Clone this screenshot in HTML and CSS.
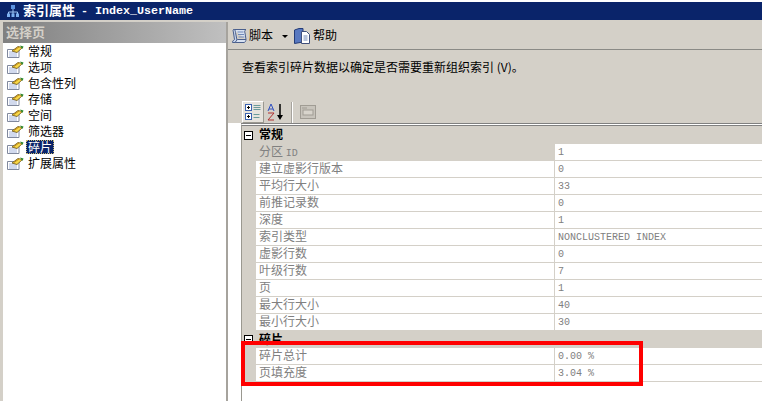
FILE: index.html
```html
<!DOCTYPE html>
<html lang="zh">
<head>
<meta charset="utf-8">
<title>索引属性</title>
<link rel="stylesheet" href="styles.css">
</head>
<body>
<svg class="defs" width="0" height="0" aria-hidden="true">
  <symbol id="page" viewBox="0 0 17 13">
    <path d="M0.500 4.500H8L12 3.500V12.500H0.500z" fill="#fff" stroke="#80889c"/>
    <path d="M2 7h8M2 9h8M2 11h8" stroke="#a4b4dc"/>
    <path d="M5 6 11 1.500 15.500 2.500 10 7.500z" fill="#f8d848" stroke="#6a5010" stroke-width=".8"/>
    <path d="M7 5.500 12 2" stroke="#c08a18"/>
    <path d="M13 0.500 16.500 1.500 15.500 4z" fill="#2a8a2a"/>
  </symbol>
</svg>
<div class="window">
  <header class="title">
    <svg class="title-icon" viewBox="0 0 12 12" width="12" height="12">
      <path d="M6 1V7M1.500 10V7H10.500V10M6 7V10" stroke="#9cc4f4" fill="none"/>
      <rect x="4" y="0" width="4" height="4" fill="#5c94e0"/>
      <rect x="0" y="8.500" width="3" height="3.500" fill="#7cb0f0"/>
      <rect x="4.500" y="8.500" width="3" height="3.500" fill="#7cb0f0"/>
      <rect x="9" y="8.500" width="3" height="3.500" fill="#7cb0f0"/>
    </svg>
    <span class="title-cjk">索引属性</span>
    <span class="title-latin">- Index_UserName</span>
  </header>
  <div class="body">
    <aside class="side">
      <div class="side-head">选择页</div>
      <ul class="pages">
        <li class="page"><svg class="page-icon"><use href="#page"/></svg><span>常规</span></li>
        <li class="page"><svg class="page-icon"><use href="#page"/></svg><span>选项</span></li>
        <li class="page"><svg class="page-icon"><use href="#page"/></svg><span>包含性列</span></li>
        <li class="page"><svg class="page-icon"><use href="#page"/></svg><span>存储</span></li>
        <li class="page"><svg class="page-icon"><use href="#page"/></svg><span>空间</span></li>
        <li class="page"><svg class="page-icon"><use href="#page"/></svg><span>筛选器</span></li>
        <li class="page"><svg class="page-icon"><use href="#page"/></svg><span class="selected">碎片</span></li>
        <li class="page"><svg class="page-icon"><use href="#page"/></svg><span>扩展属性</span></li>
      </ul>
    </aside>
    <main class="main">
      <div class="toolbar">
        <svg class="tool-icon" viewBox="0 0 16 16" width="16" height="16">
          <path d="M2.500 1.500H15C13.500 2.500 13.500 3.500 14 5L15 11.500H6.500C5 11.500 4 13 4 14.500H13C14 14.500 15 13 15 11.500" fill="#d8e2f2" stroke="#4a5f8c"/>
          <path d="M2.500 1.500C4 1.500 4.500 3 4.500 4.500L6 12 4 14.500H1.500C1 14 2.500 12 3.500 11.500L2.500 5C2.500 3.500 1.500 2.500 2.500 1.500z" fill="#c4d2ea" stroke="#4a5f8c"/>
          <path d="M6.500 4h6M7 6.500h6M7.500 9h6" stroke="#7088b8"/>
        </svg>
        <span class="tool-label">脚本</span>
        <span class="caret"></span>
        <svg class="tool-icon help-icon" viewBox="0 0 16 16" width="16" height="16">
          <path d="M0.500 2 5 0.500H9V14L0.500 15.500z" fill="#5878c0" stroke="#243c78"/>
          <path d="M7.500 3.500h5l3 3V15.500h-8z" fill="#fff" stroke="#40507c"/>
          <path d="M9.500 8h4M9.500 10h4M9.500 12h4" stroke="#7088b8"/>
        </svg>
        <span class="tool-label">帮助</span>
      </div>
      <p class="desc">查看索引碎片数据以确定是否需要重新组织索引 (V)。</p>
      <div class="prop-tools">
        <span class="prop-btn active">
          <svg viewBox="0 0 20 20" width="20" height="20">
            <rect x="2.500" y="2.500" width="6" height="6" fill="#fff" stroke="#3a62b0"/>
            <rect x="2.500" y="11.500" width="6" height="6" fill="#fff" stroke="#3a62b0"/>
            <path d="M4 5.500h3M5.500 4v3M4 14.500h3M5.500 13v3" stroke="#000"/>
            <path d="M10.500 3.500h7M10.500 5.500h7M10.500 7.500h7" stroke="#6a9a9a"/>
            <path d="M10.500 12.500h6M10.500 15.500h6" stroke="#6a9a9a"/>
          </svg>
        </span>
        <span class="prop-btn">
          <svg viewBox="0 0 20 20" width="20" height="20">
            <path d="M2 9 5 2l3 7M3 7h4" stroke="#3050c0" fill="none"/>
            <path d="M2 11h6l-6 7h6" stroke="#b03030" fill="none"/>
            <path d="M14 2v13" stroke="#000" stroke-width="1.500"/>
            <path d="M11 13h6l-3 5z" fill="#000"/>
          </svg>
        </span>
        <span class="prop-sep"></span>
        <span class="prop-btn">
          <svg viewBox="0 0 20 20" width="20" height="20">
            <rect x="2.500" y="3.500" width="15" height="13" fill="#c8c4bc" stroke="#a09c94"/>
            <rect x="5" y="8" width="10" height="5" fill="#d8d4cc" stroke="#a09c94"/>
            <path d="M4 6h5" stroke="#a09c94"/>
          </svg>
        </span>
      </div>
      <div class="grid">
        <div class="group first"><span class="toggle"></span><b>常规</b></div>
        <div class="row current"><span class="name">分区 <i>ID</i></span><span class="val">1</span></div>
        <div class="row"><span class="name">建立虚影行版本</span><span class="val">0</span></div>
        <div class="row"><span class="name">平均行大小</span><span class="val">33</span></div>
        <div class="row"><span class="name">前推记录数</span><span class="val">0</span></div>
        <div class="row"><span class="name">深度</span><span class="val">1</span></div>
        <div class="row"><span class="name">索引类型</span><span class="val">NONCLUSTERED INDEX</span></div>
        <div class="row"><span class="name">虚影行数</span><span class="val">0</span></div>
        <div class="row"><span class="name">叶级行数</span><span class="val">7</span></div>
        <div class="row"><span class="name">页</span><span class="val">1</span></div>
        <div class="row"><span class="name">最大行大小</span><span class="val">40</span></div>
        <div class="row"><span class="name">最小行大小</span><span class="val">30</span></div>
        <div class="group"><span class="toggle"></span><b>碎片</b></div>
        <div class="row"><span class="name">碎片总计</span><span class="val">0.00 %</span></div>
        <div class="row"><span class="name">页填充度</span><span class="val">3.04 %</span></div>
      </div>
      <div class="highlight"></div>
    </main>
  </div>
</div>
</body>
</html>
```
FILE: styles.css
```css
* { box-sizing: border-box; }
html, body { margin: 0; height: 100%; }
body {
  width: 762px;
  height: 401px;
  overflow: hidden;
  background: #fff;
  font-family: "Noto Sans CJK SC", "Liberation Sans", sans-serif;
  font-size: 12px;
  color: #000;
}
.defs { position: absolute; }
.window { display: flex; flex-direction: column; height: 100%; padding-top: 2px; background: linear-gradient(#fff 2px, #d4d0c8 2px); }
.title {
  display: flex;
  align-items: center;
  height: 18px;
  flex: none;
  padding-left: 7px;
  background: #0a246a;
  color: #fff;
  font-weight: 700;
}
.title-icon { margin-right: 4px; }
.title-cjk { font-size: 13px; line-height: 16px; padding-bottom: 2px; width: 58px; }
.title-latin { font-family: "Liberation Mono", monospace; font-size: 11.67px; white-space: pre; }
.body { flex: 1; display: flex; margin-top: 2px; min-height: 0; }
.side {
  width: 225px;
  flex: none;
  margin-left: 3px;
  display: flex;
  flex-direction: column;
  background: #fff;
  border-right: 2px solid #a6a39d;
}
.side-head {
  height: 21px;
  flex: none;
  padding-left: 3px;
  font-weight: 700;
  font-size: 13px;
  line-height: 19px;
  color: #d4d0c8;
  background: linear-gradient(to right, #808080, #c0c0c0);
}
.pages { list-style: none; margin: 0; padding: 0; }
.page { display: flex; align-items: center; height: 16px; padding-left: 4px; }
.page-icon { width: 17px; height: 13px; margin-right: 3px; flex: none; }
.page span { line-height: 14px; padding: 0 1px; }
.page .selected { background: #0a246a; color: #fff; outline: 1px dotted #c8b870; outline-offset: -1px; padding: 0 2px; margin-left: -1px; }
.main { flex: 1; min-width: 0; position: relative; display: flex; flex-direction: column; background: #fff; }
.toolbar {
  height: 28px;
  flex: none;
  display: flex;
  align-items: center;
  padding-left: 3px;
  background: #d4d0c8;
  border-bottom: 1px solid #8a8a86;
}
.tool-icon { flex: none; margin-right: 2px; }
.help-icon { margin-right: 3px; }
.tool-label { line-height: 16px; padding-bottom: 2px; }
.caret {
  width: 0;
  height: 0;
  margin: 2px 6px 0 9px;
  border: 3px solid transparent;
  border-top: 3px solid #000;
  border-bottom: 0;
}
.desc { flex: none; height: 51px; margin: 0; padding: 7px 0 0 14px; background: #d4d0c8; line-height: 20px; white-space: pre; }
.prop-tools {
  flex: none;
  display: flex;
  align-items: center;
  height: 22px;
  padding-left: 14px;
  background: #d4d0c8;
  gap: 1px;
}
.prop-btn { width: 22px; height: 22px; display: flex; align-items: center; justify-content: center; }
.prop-btn.active { background: #e6e3dd; border: 1px solid #fff; border-right-color: #9a9890; border-bottom-color: #9a9890; }
.prop-sep { width: 2px; height: 21px; margin: 0 3px; background: #a6a39d; border-right: 1px solid #fff; }
.grid {
  flex: 1;
  margin-left: 13px;
  border-left: 1px solid #9a9890;
  border-top: 3px double #808080;
  background: #fff;
}
.group {
  height: 17px;
  display: flex;
  align-items: center;
  background: #d4d0c8;
  line-height: 16px;
}
.group.first { height: 18px; }
.group b { padding-bottom: 2px; }
.toggle {
  width: 9px;
  height: 9px;
  margin: 0 6px 0 2px;
  border: 1px solid #000;
  background: linear-gradient(#000, #000) center / 5px 1px no-repeat #fff;
}
.row {
  display: flex;
  height: 17px;
  background: #d4d0c8;
  color: #808080;
}
.name {
  width: 299px;
  flex: none;
  padding-left: 3px;
  margin-left: 14px;
  background: #fff;
  line-height: 14px;
  border-bottom: 1px solid #d4d0c8;
  border-right: 1px solid #d4d0c8;
  white-space: pre;
}
.row.current .name { background: #d4d0c8; }
.name i { font-style: normal; font-family: "Liberation Mono", monospace; font-size: 10px; }
.val {
  flex: 1;
  padding: 2px 0 0 3px;
  background: #fff;
  border-bottom: 1px solid #d4d0c8;
  font-family: "Liberation Mono", monospace;
  font-size: 10px;
  line-height: 14px;
}
.highlight {
  position: absolute;
  left: 13px;
  top: 319px;
  width: 402px;
  height: 45px;
  border: 4px solid #f00;
}
```
